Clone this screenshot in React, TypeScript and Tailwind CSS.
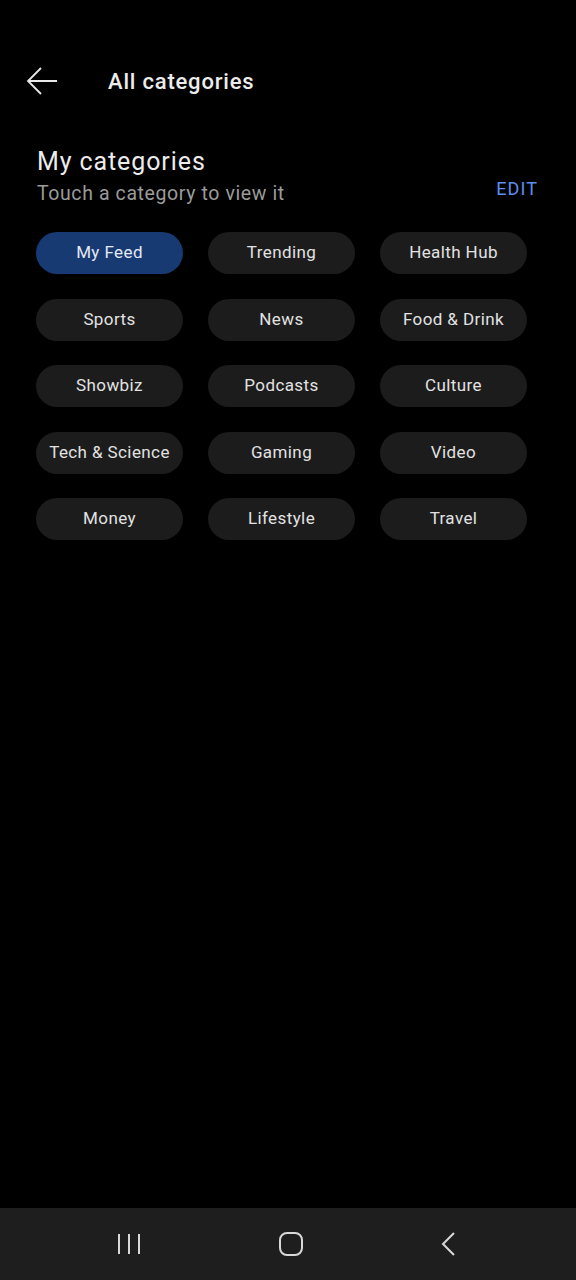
const categories = [
  'My Feed', 'Trending', 'Health Hub',
  'Sports', 'News', 'Food & Drink',
  'Showbiz', 'Podcasts', 'Culture',
  'Tech & Science', 'Gaming', 'Video',
  'Money', 'Lifestyle', 'Travel',
];

export default function App() {
  return (
    <div className="w-[576px] h-[1280px] bg-black flex flex-col font-['Roboto',sans-serif] overflow-hidden">
      {/* Header */}
      <div className="flex items-center h-[64px] mt-[49px] pl-[26px]">
        <svg width="32" height="30" viewBox="0 0 32 30">
          <path d="M31 15H2M15 2L2 15l13 13" fill="none" stroke="#e8e8e8" strokeWidth="1.8" />
        </svg>
        <h1 className="ml-[50px] text-[22px] font-medium text-[#ececec] tracking-[0.8px]">All categories</h1>
      </div>

      {/* Section title */}
      <div className="flex items-end justify-between pl-[37px] pr-[38px] mt-[32px]">
        <div>
          <h2 className="text-[25px] leading-[34px] text-[#ececec] tracking-[0.9px]">My categories</h2>
          <p className="text-[19.5px] leading-[30px] text-[#9b9b9b] tracking-[0.6px]">Touch a category to view it</p>
        </div>
        <button className="text-[18px] text-[#5d8ff0] tracking-[1.1px] mb-[7px]">EDIT</button>
      </div>

      {/* Pills */}
      <div className="grid grid-cols-[147px_147px_147px] gap-x-[25px] gap-y-[24.5px] pl-[36px] mt-[23px]">
        {categories.map((c, i) => (
          <div
            key={c}
            className={`h-[42px] rounded-full flex items-center justify-center text-[17px] tracking-[0.4px] ${
              i === 0 ? 'bg-[#173a73] text-[#e4e9f2]' : 'bg-[#1c1c1c] text-[#e2e2e2]'
            }`}
          >
            {c}
          </div>
        ))}
      </div>

      <div className="flex-1" />

      {/* System nav bar */}
      <div className="h-[72px] bg-[#1e1e1e] flex items-center justify-between px-[114px]">
        <svg width="26" height="26" viewBox="0 0 26 26" className="ml-[2px]">
          <path d="M3 3v20M13 3v20M23 3v20" stroke="#d8d8d8" strokeWidth="2" />
        </svg>
        <svg width="26" height="26" viewBox="0 0 26 26" className="ml-[4px]">
          <rect x="2" y="2" width="22" height="22" rx="7" fill="none" stroke="#d8d8d8" strokeWidth="2" />
        </svg>
        <svg width="26" height="26" viewBox="0 0 26 26">
          <path d="M18 2L7 13l11 11" fill="none" stroke="#d8d8d8" strokeWidth="2" />
        </svg>
      </div>
    </div>
  );
}
